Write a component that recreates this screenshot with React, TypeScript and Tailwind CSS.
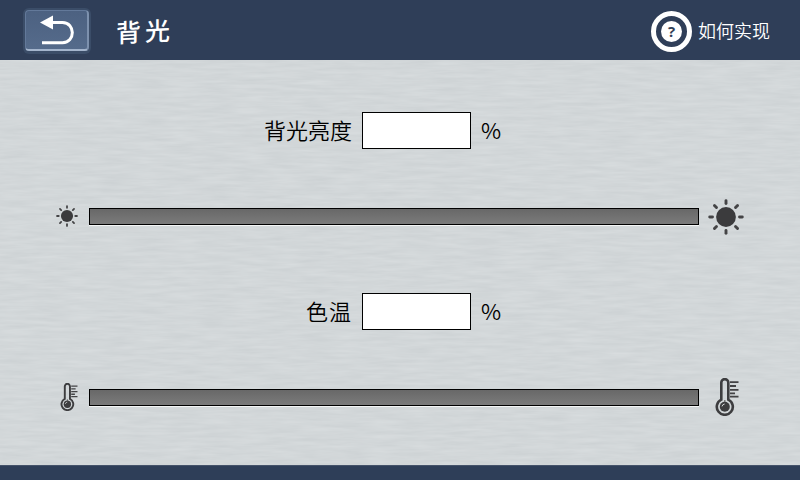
import React from "react";

const uiFont = "font-['Noto_Sans_CJK_SC',sans-serif]";

function BrushedMetal() {
  return (
    <svg className="absolute inset-0 h-full w-full" aria-hidden="true">
      <filter id="brushed" x="0" y="0" width="100%" height="100%" colorInterpolationFilters="sRGB">
        <feTurbulence type="fractalNoise" baseFrequency="0.03 0.28" numOctaves="3" seed="8" />
        <feColorMatrix values="0.055 0 0 0 0.796  0.052 0 0 0 0.816  0.05 0 0 0 0.825  0 0 0 0 1" />
      </filter>
      <rect width="100%" height="100%" filter="url(#brushed)" />
    </svg>
  );
}

function BackButton() {
  return (
    <button className="flex h-[46px] w-[68px] items-center justify-center rounded-md bg-[#3b4d68] pb-px" aria-label="返回">
      <span className="flex h-[41px] w-[64px] items-center justify-center rounded-[4px] border border-t-[#63799a] border-r-2 border-r-[#7d91ae] border-b-2 border-b-[#a4b5cd] border-l-[#63799a] bg-linear-to-b from-[#4c6181] to-[#556b8b]">
        <svg width="36" height="30" viewBox="0 0 36 30" fill="none">
          <path d="M12 7.5H23.5C36.6 7.5 36.6 27.7 23.5 27.7H3" stroke="white" strokeWidth="3" />
          <path d="M1 7.5L14 0.6V14.4Z" fill="white" />
        </svg>
      </span>
    </button>
  );
}

function HelpIcon() {
  return (
    <span className="flex h-[41px] w-[41px] items-center justify-center rounded-full border-5 border-white">
      <span className="flex h-[21px] w-[21px] items-center justify-center rounded-full bg-white font-['Open_Sans',sans-serif] text-[15px] leading-none font-bold text-[#303e56]">
        ?
      </span>
    </span>
  );
}

function Sun({ size }: { size: number }) {
  return (
    <svg width={size} height={size} viewBox="0 0 36 36" className="shrink-0">
      <circle cx="18" cy="18" r="9.9" fill="#3b3b3d" />
      {[0, 45, 90, 135, 180, 225, 270, 315].map((angle) => (
        <path
          key={angle}
          d="M18 1.7V4.5"
          stroke="#444446"
          strokeWidth="2.9"
          strokeLinecap="round"
          transform={`rotate(${angle} 18 18)`}
        />
      ))}
    </svg>
  );
}

function Thermometer({ width, height }: { width: number; height: number }) {
  return (
    <svg width={width} height={height} viewBox="0 0 24 38" fill="none" className="shrink-0">
      <path d="M6.3 21.6V4.6a3.5 3.5 0 0 1 7 0V21.6a8 8 0 1 1-7 0Z" stroke="#3d3d3f" strokeWidth="2.6" />
      <path d="M9.8 22V27" stroke="#77797a" strokeWidth="1.5" />
      <circle cx="9.8" cy="28.8" r="5" fill="#3d3d3f" />
      <path d="M7 28.4A3 3 0 0 1 9.6 26" stroke="#d2d5d6" strokeWidth="1" />
      <path d="M15 4.2H23.5M15 8H21M15 11.8H23.5M15 15.3H20M15 18.6H23.5" stroke="#434345" strokeWidth="1.8" />
    </svg>
  );
}

function ValueRow({ label, spacing }: { label: string; spacing: string }) {
  return (
    <div className={`flex h-[37px] items-center text-[22px] text-black ${uiFont}`}>
      <span className={`w-[352px] pb-[2px] text-right leading-[35px] font-[350] whitespace-nowrap ${spacing}`}>{label}</span>
      <input aria-label={label} className="ml-[10px] h-[37px] w-[109px] border border-black bg-white px-2 outline-none" />
      <span className="ml-[10px] pb-[2px] text-[22px] leading-[35px] font-[350]">%</span>
    </div>
  );
}

function SliderRow({ start, end }: { start: React.ReactNode; end: React.ReactNode }) {
  return (
    <div className="flex h-[40px] items-center">
      <span className="flex w-[89px] justify-end pr-[11px]">{start}</span>
      <span className="h-[17px] w-[610px] border border-black bg-linear-to-b from-[#686868] to-[#7b7b7b] shadow-[0_1px_0_#f4f6f6]" />
      <span className="flex pl-[9px]">{end}</span>
    </div>
  );
}

export default function App() {
  return (
    <div className="flex h-[480px] w-[800px] flex-col overflow-hidden bg-[#2f3e58]">
      <header className={`flex h-[60px] shrink-0 items-center bg-[#2f3e58] pt-[2px] pr-[30px] pl-[23px] text-white ${uiFont}`}>
        <BackButton />
        <h1 className="ml-[25px] -skew-y-3 pb-[2px] font-['KaiTi','STKaiti','Noto_Sans_CJK_SC',serif] text-[25px] leading-none font-medium tracking-[4px]">背光</h1>
        <div className="ml-auto flex items-center">
          <HelpIcon />
          <span className="ml-[6px] pb-[2px] text-[18px] leading-none font-[350]">如何实现</span>
        </div>
      </header>
      <main className="relative h-[405px] shrink-0 bg-[#d1d6d8]">
        <BrushedMetal />
        <div className="relative flex flex-col pt-[52px]">
          <ValueRow label="背光亮度" spacing="tracking-normal" />
          <div className="mt-[47px]">
            <SliderRow start={<Sun size={22} />} end={<span className="pt-px"><Sun size={36} /></span>} />
          </div>
          <div className="mt-[57px]">
            <ValueRow label="色温" spacing="tracking-[1px]" />
          </div>
          <div className="mt-[47px]">
            <SliderRow
              start={<Thermometer width={18} height={28} />}
              end={<span className="pl-[7px]"><Thermometer width={24} height={38} /></span>}
            />
          </div>
        </div>
      </main>
      <footer className="h-[15px] shrink-0 border-t border-[#45536a] bg-[#2e3e58]" />
    </div>
  );
}
